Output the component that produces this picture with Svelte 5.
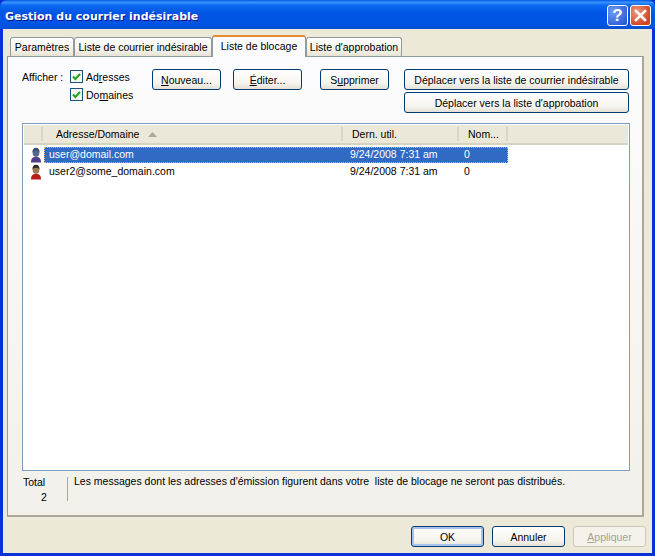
<script>
  let rows = [
    { address: 'user@domail.com', used: '9/24/2008 7:31 am', count: 0, body: '#4f3f86', head: '#56688c', hair: '#3a4c74', selected: true },
    { address: 'user2@some_domain.com', used: '9/24/2008 7:31 am', count: 0, body: '#b81f1a', head: '#a07a58', hair: '#2c2620', selected: false }
  ];
</script>

<div class="window">
  <header class="titlebar">
    <span class="title">Gestion du courrier indésirable</span>
    <button class="caption help" aria-label="Aide">?</button>
    <button class="caption close" aria-label="Fermer">
      <svg width="13" height="13" viewBox="0 0 13 13"><path d="M2 2l9 9M11 2l-9 9" stroke="#fff" stroke-width="2.6" stroke-linecap="square" /></svg>
    </button>
  </header>

  <div class="client">
    <nav class="tabs">
      <button class="tab params">Paramètres</button>
      <button class="tab junk">Liste de courrier indésirable</button>
      <button class="tab active">Liste de blocage</button>
      <button class="tab approve">Liste d'approbation</button>
    </nav>

    <section class="panel">
      <div class="toolbar">
        <span class="show-label">Afficher :</span>
        <div class="checks">
          <label class="check">
            <svg width="13" height="13" viewBox="0 0 13 13"><rect x=".5" y=".5" width="12" height="12" fill="#f6f6f0" stroke="#1c5180" /><path d="M3 6.500l2.400 2.500 4.600-5" fill="none" stroke="#21a121" stroke-width="2" /></svg>
            <span>Ad<u>r</u>esses</span>
          </label>
          <label class="check">
            <svg width="13" height="13" viewBox="0 0 13 13"><rect x=".5" y=".5" width="12" height="12" fill="#f6f6f0" stroke="#1c5180" /><path d="M3 6.500l2.400 2.500 4.600-5" fill="none" stroke="#21a121" stroke-width="2" /></svg>
            <span>Do<u>m</u>aines</span>
          </label>
        </div>
        <button class="btn small"><u>N</u>ouveau...</button>
        <button class="btn small"><u>É</u>diter...</button>
        <button class="btn small supprimer">S<u>u</u>pprimer</button>
        <div class="moves">
          <button class="btn">Déplacer vers la liste de courrier indésirable</button>
          <button class="btn">Déplacer vers la liste d'approbation</button>
        </div>
      </div>

      <div class="list">
        <div class="list-head">
          <div class="hcell first"></div>
          <div class="hcell">Adresse/Domaine
            <svg class="sort" width="9" height="5" viewBox="0 0 9 5"><path d="M4.500 0L9 5H0z" fill="#aca899" /></svg>
          </div>
          <div class="hcell">Dern. util.</div>
          <div class="hcell">Nom...</div>
        </div>
        {#each rows as row}
          <div class="row">
            <svg class="person" width="14" height="16" viewBox="0 0 14 16">
              <path d="M2 15.500c0-3.500 1-5.500 5-5.500s5 2 5 5.500z" fill={row.body} />
              <ellipse cx="7" cy="5.500" rx="3.400" ry="4.400" fill={row.head} />
              <path d="M3.500 5.500c-.4-6.500 7.400-6.500 7 0-1-2.500-6-2.500-7 0z" fill={row.hair} />
            </svg>
            <div class="cells" class:selected={row.selected}>
              <span class="address">{row.address}</span>
              <span class="used">{row.used}</span>
              <span class="count">{row.count}</span>
            </div>
          </div>
        {/each}
      </div>

      <div class="status">
        <div class="total">
          <div class="total-label">Total</div>
          <div class="total-value">2</div>
        </div>
        <p class="message">Les messages dont les adresses d'émission figurent dans votre&nbsp; liste de blocage ne seront pas distribués.</p>
      </div>
    </section>

    <footer class="actions">
      <button class="btn action default">OK</button>
      <button class="btn action">Annuler</button>
      <button class="btn action" disabled><u>A</u>ppliquer</button>
    </footer>
  </div>
</div>

<style>
  :global(body) {
    margin: 0;
    background: #0831d9;
  }

  .window {
    width: 655px;
    height: 556px;
    display: flex;
    flex-direction: column;
    font-family: "Liberation Sans", Arial, sans-serif;
    font-size: 10.5px;
    color: #000;
    overflow: hidden;
  }

  .titlebar {
    height: 29px;
    flex: none;
    display: flex;
    align-items: center;
    gap: 2px;
    padding: 2px 4px 0 5px;
    box-sizing: border-box;
    border-radius: 7px 7px 0 0;
    background: linear-gradient(#0058e6 0%, #3a93ff 8%, #0a6af0 18%, #0055e5 45%, #0054e3 85%, #0a4fd0 100%);
  }

  .title {
    flex: 1;
    margin-top: 1px;
    color: #fff;
    font-family: "DejaVu Sans", sans-serif;
    font-size: 11px;
    font-weight: bold;
    text-shadow: 1px 1px #0f1089;
  }

  .caption {
    width: 21px;
    height: 21px;
    padding: 0;
    border: 1px solid #fff;
    border-radius: 3px;
    display: flex;
    align-items: center;
    justify-content: center;
  }

  .help {
    background: radial-gradient(circle at 30% 30%, #6f9cf5, #2c58d8 85%);
    color: #fff;
    font-family: "Liberation Sans", sans-serif;
    font-size: 17px;
    font-weight: bold;
  }

  .close {
    background: radial-gradient(circle at 30% 30%, #ec9a7e, #d2431f 75%);
  }

  .client {
    flex: 1;
    min-height: 0;
    margin: 0 3px 3px 3px;
    background: #ece9d8;
    padding: 7px 6px 0 4px;
    display: flex;
    flex-direction: column;
  }

  .tabs {
    height: 20px;
    flex: none;
    display: flex;
    align-items: flex-end;
    padding-left: 3px;
    position: relative;
    z-index: 1;
  }

  .tab {
    height: 19px;
    padding: 0;
    font: inherit;
    background: linear-gradient(#fff, #f3f1e8 70%, #e6e3d4);
    border: 1px solid #919b9c;
    border-bottom: none;
    border-radius: 3px 3px 0 0;
    color: #000;
    white-space: nowrap;
  }

  .params {
    width: 64px;
  }

  .junk {
    width: 138px;
  }

  .approve {
    width: 96px;
  }

  .tab.active {
    width: 94px;
    height: 22px;
    margin-bottom: -1px;
    padding: 0 0 3px 0;
    background: #fcfcfe;
    border-top: 2px solid #e68b2c;
  }

  .panel {
    height: 461px;
    flex: none;
    margin-right: 2px;
    box-sizing: border-box;
    border: 1px solid #919b9c;
    border-right-width: 2px;
    border-bottom-width: 2px;
    border-right-color: #aca899;
    border-bottom-color: #aca899;
    background: linear-gradient(#fcfcfe, #f2f0e9);
    padding: 12px 12px 0 14px;
    display: flex;
    flex-direction: column;
  }

  .toolbar {
    display: flex;
    align-items: flex-start;
    height: 54px;
    flex: none;
  }

  .show-label {
    width: 48px;
    margin-top: 2px;
  }

  .checks {
    width: 82px;
    display: flex;
    flex-direction: column;
    gap: 5px;
    margin-top: 1px;
  }

  .check {
    display: flex;
    align-items: center;
    gap: 3px;
    height: 13px;
  }

  .btn {
    font: inherit;
    height: 21px;
    padding: 1px 0 0;
    color: #000;
    border: 1px solid #003c74;
    border-radius: 3px;
    background: linear-gradient(#fff, #f5f4ee 70%, #e3e0d5);
    white-space: nowrap;
  }

  .small {
    width: 69px;
    margin-right: 12px;
  }

  .supprimer {
    margin-left: 6px;
    margin-right: 15px;
  }

  .moves {
    display: flex;
    flex-direction: column;
    gap: 2px;
  }

  .moves .btn {
    width: 225px;
  }

  .list {
    height: 348px;
    flex: none;
    box-sizing: border-box;
    border: 1px solid #7f9db9;
    background: #fff;
    padding: 1px;
  }

  .list-head {
    height: 18px;
    background: #ebe8d9;
    border-bottom: 2px solid #d6d2c2;
    box-sizing: content-box;
    display: grid;
    grid-template-columns: 19px 300px 116px 49px;
    align-items: center;
    margin-bottom: 1px;
  }

  .hcell {
    height: 14px;
    line-height: 14px;
    border-right: 2px solid #d8d5c5;
    box-sizing: border-box;
    padding-left: 13px;
    white-space: nowrap;
  }

  .hcell + .hcell + .hcell {
    padding-left: 9px;
  }

  .hcell:last-child {
    padding-left: 7px;
  }

  .first {
    padding: 0;
  }

  .sort {
    margin-left: 6px;
    vertical-align: 1px;
  }

  .row {
    height: 17px;
    display: flex;
    align-items: center;
  }

  .person {
    width: 14px;
    margin-left: 5px;
    flex: none;
  }

  .cells {
    margin-left: 1px;
    width: 464px;
    height: 16px;
    box-sizing: border-box;
    display: grid;
    grid-template-columns: 301px 114px 1fr;
    align-items: center;
    padding: 0 0 1px 5px;
    white-space: nowrap;
  }

  .selected {
    background: #316ac5;
    color: #fff;
    outline: 1px dotted #e8b060;
    outline-offset: -1px;
  }

  .status {
    display: flex;
    align-items: flex-start;
    margin-top: 4px;
  }

  .total {
    width: 44px;
    border-right: 1px solid #aca899;
    height: 24px;
    margin-top: 2px;
    line-height: 15px;
    box-sizing: content-box;
    flex: none;
    margin-left: 1px;
  }

  .total-label {
    margin-top: -2px;
  }

  .total-value {
    padding-left: 18px;
  }

  .message {
    margin: 0 0 0 6px;
    line-height: 12px;
    white-space: nowrap;
  }

  .actions {
    flex: 1;
    display: flex;
    justify-content: flex-end;
    align-items: flex-start;
    gap: 8px;
    padding-top: 9px;
  }

  .action {
    width: 73px;
  }

  .default {
    box-shadow: inset 0 0 0 2px #a6c2ec;
  }

  .action:disabled {
    color: #a5a391;
    border-color: #c9c7ba;
    background: #f4f2ea;
  }
</style>
